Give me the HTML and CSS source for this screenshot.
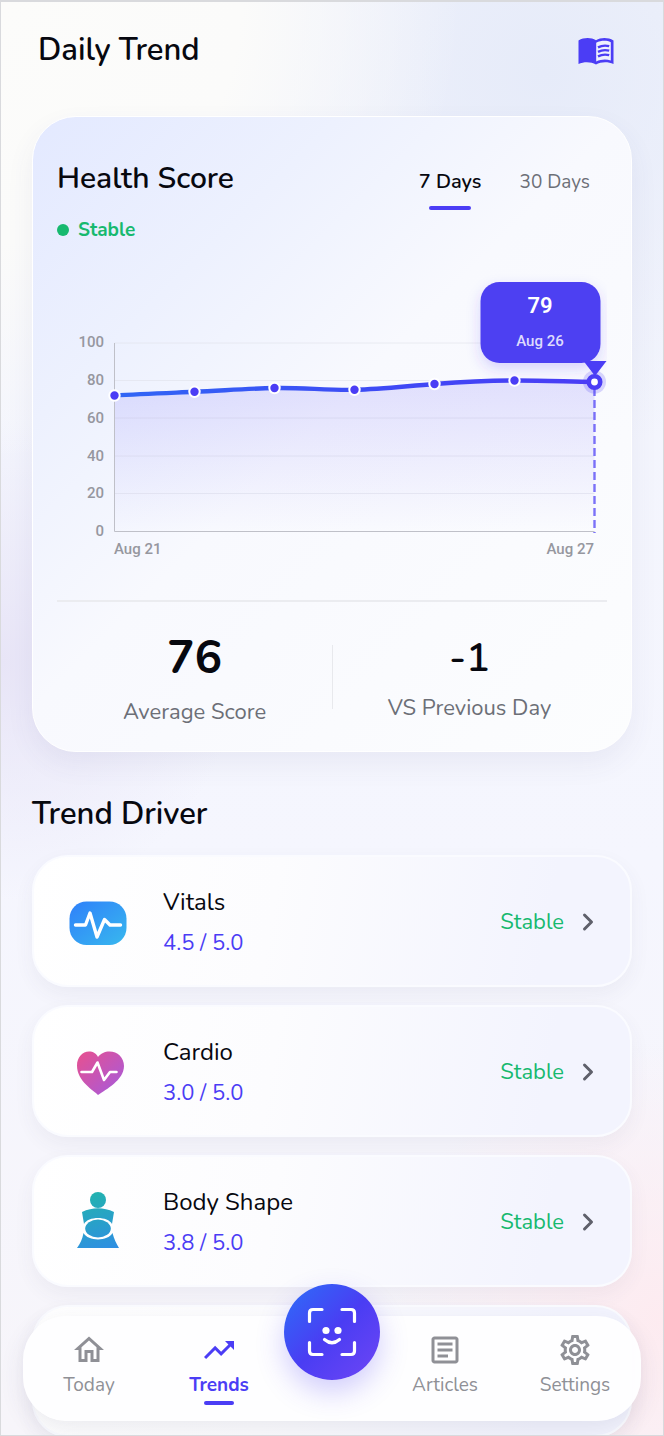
FILE: index.html
```
<!DOCTYPE html>
<html lang="en">
<head>
    <meta charset="UTF-8">
    <meta name="viewport" content="width=device-width, initial-scale=1.0">
    <title>Daily Trend</title>
    <link rel="stylesheet" href="styles.css">
</head>
<body>

<div class="app">
    <main class="content">

        <header class="page-header">
            <h1>Daily Trend</h1>
            <button class="guide-btn" aria-label="Open guide">
                <svg width="36" height="28" viewBox="0 0 36 28">
                    <path fill="#4b3df5" d="M0.5 3.5C6 0.3 13 0.3 18 3.2C23 0.3 30 0.3 35.5 3.5V27C30 24.4 23 24.6 18 27.4C13 24.6 6 24.4 0.5 27Z"/>
                    <path fill="#eef1fd" d="M18.2 5.8C23 3.4 28.5 3.2 32.8 5.2V23.4C28 21.8 23 22.2 18.2 24.4Z"/>
                    <path fill="none" stroke="#4b3df5" stroke-width="2.4" d="M20 10.4Q25.4 7.6 31.2 9.2M20 14.9Q25.4 12.1 31.2 13.7M20 19.4Q25.4 16.6 31.2 18.2"/>
                </svg>
            </button>
        </header>

        <section class="score-card">
            <div class="score-head">
                <div>
                    <h2>Health Score</h2>
                    <p class="status"><span class="dot"></span>Stable</p>
                </div>
                <div class="tabs">
                    <button class="tab active">7 Days</button>
                    <button class="tab">30 Days</button>
                </div>
            </div>

            <svg class="chart" viewBox="0 0 550 310" role="img" aria-label="Health score, Aug 21 to Aug 27">
                <defs>
                    <linearGradient id="area" x1="0" y1="0" x2="0" y2="1">
                        <stop offset="0" stop-color="#4b3df5" stop-opacity="0.14"/>
                        <stop offset="1" stop-color="#4b3df5" stop-opacity="0"/>
                    </linearGradient>
                    <linearGradient id="line" gradientUnits="userSpaceOnUse" x1="57" y1="0" x2="537" y2="0">
                        <stop offset="0" stop-color="#3066f5"/>
                        <stop offset="0.6" stop-color="#3f48f5"/>
                        <stop offset="1" stop-color="#4b3df5"/>
                    </linearGradient>
                    <filter id="tipShadow" x="-30%" y="-30%" width="160%" height="170%">
                        <feDropShadow dx="0" dy="6" stdDeviation="7" flood-color="#4b3df5" flood-opacity="0.2"/>
                    </filter>
                </defs>

                <!-- grid and axes -->
                <path class="grid" d="M57.5 73H537.5M57.5 110.5H537.5M57.5 148H537.5M57.5 186H537.5M57.5 223.5H537.5"/>
                <path fill="url(#area)" d="M57.5 125.5C84 124 110 123 137.5 121.8S190 118.6 217.5 118S270 120.4 297.5 119.8S350 116 377.5 114S430 110.6 457.5 110.5S510 111.6 537.5 112V261H57.5Z"/>
                <path class="axis" d="M57.5 73V261.5H537.5"/>

                <g class="axis-labels" text-anchor="end">
                    <text x="47" y="77">100</text>
                    <text x="47" y="115">80</text>
                    <text x="47" y="153">60</text>
                    <text x="47" y="191">40</text>
                    <text x="47" y="228">20</text>
                    <text x="47" y="266">0</text>
                </g>
                <g class="axis-labels">
                    <text x="57" y="284">Aug 21</text>
                    <text x="537" y="284" text-anchor="end">Aug 27</text>
                </g>

                <!-- series -->
                <path d="M537.5 118V263" stroke="#4b3df5" stroke-opacity="0.72" stroke-width="2.4" stroke-dasharray="8 4"/>
                <path fill="none" stroke="url(#line)" stroke-width="4.4" d="M57.5 125.5C84 124 110 123 137.5 121.8S190 118.6 217.5 118S270 120.4 297.5 119.8S350 116 377.5 114S430 110.6 457.5 110.5S510 111.6 537.5 112"/>
                <g class="points">
                    <circle cx="57.5" cy="125.5" r="5.2"/>
                    <circle cx="137.5" cy="121.8" r="5.2"/>
                    <circle cx="217.5" cy="118" r="5.2"/>
                    <circle cx="297.5" cy="119.8" r="5.2"/>
                    <circle cx="377.5" cy="114" r="5.2"/>
                    <circle cx="457.5" cy="110.5" r="5.2"/>
                </g>

                <!-- selected day -->
                <rect x="423.5" y="12" width="120" height="81" rx="19" fill="#4e41f2" filter="url(#tipShadow)"/>
                <circle cx="537.5" cy="112" r="11.5" fill="#4b3df5" fill-opacity="0.2"/>
                <path fill="#4b3df5" d="M526.5 91H549.5L538 106Z"/>
                <circle cx="537.5" cy="112" r="5.7" fill="#fff" stroke="#4b3df5" stroke-width="4.6"/>
                <text class="tip-value" x="483" y="43" text-anchor="middle">79</text>
                <text class="tip-date" x="483" y="76" text-anchor="middle">Aug 26</text>
            </svg>

            <div class="stats">
                <div class="stat">
                    <strong class="stat-main">76</strong>
                    <span>Average Score</span>
                </div>
                <div class="stat">
                    <strong>-1</strong>
                    <span>VS Previous Day</span>
                </div>
            </div>
        </section>

        <h2 class="section-title">Trend Driver</h2>

        <div class="drivers">
            <a class="driver" href="#vitals">
                <svg class="driver-icon" viewBox="0 0 60 60">
                    <defs>
                        <linearGradient id="vitals" x1="0" y1="0" x2="1" y2="1">
                            <stop offset="0" stop-color="#2f80fa"/>
                            <stop offset="1" stop-color="#38b8ee"/>
                        </linearGradient>
                    </defs>
                    <rect x="1.5" y="9.5" width="57" height="43.5" rx="17" fill="url(#vitals)"/>
                    <path fill="none" stroke="#fff" stroke-width="3.4" stroke-linecap="round" stroke-linejoin="round" d="M7.5 33H17.5L22 21L29 45L36.5 27.5L42 33H52.5"/>
                </svg>
                <span class="driver-text">
                    <span class="driver-name">Vitals</span>
                    <span class="driver-score">4.5 / 5.0</span>
                </span>
                <span class="driver-status">Stable</span>
                <svg class="chevron" viewBox="0 0 12 20"><path d="M2.5 3L9.5 10L2.5 17"/></svg>
            </a>

            <a class="driver" href="#cardio">
                <svg class="driver-icon" viewBox="0 0 60 60">
                    <defs>
                        <linearGradient id="cardio" x1="0" y1="0" x2="1" y2="1">
                            <stop offset="0" stop-color="#e8508e"/>
                            <stop offset="1" stop-color="#a35be0"/>
                        </linearGradient>
                    </defs>
                    <path fill="url(#cardio)" d="M30 53C26 48.5 9 39.5 9 23.5C9 15.5 14.5 9.5 21 9.5C25 9.5 28.5 11.5 30 15C32.5 11.5 37 9.5 41.5 9.5C49.5 9.5 56 15.5 56 24C56 38 38 47.5 30 53Z"/>
                    <path fill="none" stroke="#fff" stroke-width="2.6" stroke-linecap="round" stroke-linejoin="round" d="M13.5 30H24L29.5 20.5L36 38L42 30H48.5"/>
                </svg>
                <span class="driver-text">
                    <span class="driver-name">Cardio</span>
                    <span class="driver-score">3.0 / 5.0</span>
                </span>
                <span class="driver-status">Stable</span>
                <svg class="chevron" viewBox="0 0 12 20"><path d="M2.5 3L9.5 10L2.5 17"/></svg>
            </a>

            <a class="driver" href="#body-shape">
                <svg class="driver-icon" viewBox="0 0 60 60">
                    <defs>
                        <linearGradient id="body" gradientUnits="userSpaceOnUse" x1="22" y1="0" x2="38" y2="58">
                            <stop offset="0" stop-color="#22b3ae"/>
                            <stop offset="1" stop-color="#2f8fe2"/>
                        </linearGradient>
                    </defs>
                    <g fill="url(#body)">
                        <circle cx="30" cy="8" r="8"/>
                        <path d="M14 20Q30 12.5 46 20L44 32C40 24 20 24 16 32Z"/>
                        <ellipse cx="30" cy="36.5" rx="12.8" ry="9"/>
                        <path d="M15.5 41C20 49.5 40 49.5 44.5 41C46 47 48.5 52 51 56H9C12 52 14.5 47 15.5 41Z"/>
                    </g>
                </svg>
                <span class="driver-text">
                    <span class="driver-name">Body Shape</span>
                    <span class="driver-score">3.8 / 5.0</span>
                </span>
                <span class="driver-status">Stable</span>
                <svg class="chevron" viewBox="0 0 12 20"><path d="M2.5 3L9.5 10L2.5 17"/></svg>
            </a>

            <div class="driver"></div>
        </div>
    </main>

    <nav class="tab-bar">
        <a href="#today">
            <svg viewBox="0 0 24 24"><path d="M12 5.69l5 4.5V18h-2v-6H9v6H7v-7.81l5-4.5M12 3L2 12h3v8h6v-6h2v6h6v-8h3L12 3z"/></svg>
            <span>Today</span>
        </a>
        <a href="#trends" class="current">
            <svg viewBox="0 0 24 24"><path d="M16 6l2.29 2.29-4.88 4.88-4-4L2 16.59 3.41 18l6-6 4 4 6.3-6.29L22 12V6z"/></svg>
            <span>Trends</span>
        </a>
        <button class="scan-btn" aria-label="Scan face">
            <svg width="50" height="50" viewBox="0 0 50 50">
                <g fill="none" stroke="#fff" stroke-width="3.2" stroke-linecap="round">
                    <path d="M2.5 14.5V6Q2.5 2.5 6 2.5H15M35 2.5H44Q47.5 2.5 47.5 6V14.5M47.5 35.5V44Q47.5 47.5 44 47.5H35M15 47.5H6Q2.5 47.5 2.5 44V35.5"/>
                    <path d="M17.5 32.5Q25 39 32.5 32.5"/>
                </g>
                <circle cx="19" cy="23.5" r="3.6" fill="#fff"/>
                <circle cx="31" cy="23.5" r="3.6" fill="#fff"/>
            </svg>
        </button>
        <a href="#articles">
            <svg viewBox="0 0 24 24"><path d="M19 5v14H5V5h14m0-2H5c-1.1 0-2 .9-2 2v14c0 1.1.9 2 2 2h14c1.1 0 2-.9 2-2V5c0-1.1-.9-2-2-2zM14 17H7v-2h7v2zm3-4H7v-2h10v2zm0-4H7V7h10v2z"/></svg>
            <span>Articles</span>
        </a>
        <a href="#settings">
            <svg viewBox="0 0 24 24"><path d="M19.43 12.98c.04-.32.07-.64.07-.98 0-.34-.03-.66-.07-.98l2.11-1.65c.19-.15.24-.42.12-.64l-2-3.46c-.09-.16-.26-.25-.44-.25-.06 0-.12.01-.17.03l-2.49 1c-.52-.4-1.08-.73-1.69-.98l-.38-2.65C14.46 2.18 14.25 2 14 2h-4c-.25 0-.46.18-.49.42l-.38 2.65c-.61.25-1.17.59-1.69.98l-2.49-1c-.06-.02-.12-.03-.18-.03-.17 0-.34.09-.43.25l-2 3.46c-.13.22-.07.49.12.64l2.11 1.65c-.04.32-.07.65-.07.98 0 .33.03.66.07.98l-2.11 1.65c-.19.15-.24.42-.12.64l2 3.46c.09.16.26.25.44.25.06 0 .12-.01.17-.03l2.49-1c.52.4 1.08.73 1.69.98l.38 2.65c.03.24.24.42.49.42h4c.25 0 .46-.18.49-.42l.38-2.65c.61-.25 1.17-.59 1.69-.98l2.49 1c.06.02.12.03.18.03.17 0 .34-.09.43-.25l2-3.46c.12-.22.07-.49-.12-.64l-2.11-1.65zm-1.98-1.71c.04.31.05.52.05.73 0 .21-.02.43-.05.73l-.14 1.13.89.7 1.08.84-.7 1.21-1.27-.51-1.04-.42-.9.68c-.43.32-.84.56-1.25.73l-1.06.43-.16 1.13-.2 1.35h-1.4l-.19-1.35-.16-1.13-1.06-.43c-.43-.18-.83-.41-1.23-.71l-.91-.7-1.06.43-1.27.51-.7-1.21 1.08-.84.89-.7-.14-1.13c-.03-.31-.05-.54-.05-.74s.02-.43.05-.73l.14-1.13-.89-.7-1.08-.84.7-1.21 1.27.51 1.04.42.9-.68c.43-.32.84-.56 1.25-.73l1.06-.43.16-1.13.2-1.35h1.39l.19 1.35.16 1.13 1.06.43c.43.18.83.41 1.23.71l.91.7 1.06-.43 1.27-.51.7 1.21-1.07.85-.89.7.14 1.13zM12 8c-2.21 0-4 1.79-4 4s1.79 4 4 4 4-1.79 4-4-1.79-4-4-4zm0 6c-1.1 0-2-.9-2-2s.9-2 2-2 2 .9 2 2-.9 2-2 2z"/></svg>
            <span>Settings</span>
        </a>
    </nav>
</div>

</body>
</html>
```
FILE: styles.css
```
* {
    box-sizing: border-box;
}

body {
    margin: 0;
    font-family: "Nunito", "Lato", sans-serif;
    color: #07080f;
}

h1, h2, p {
    margin: 0;
}

h1, h2 {
    font-size: 31px;
    line-height: 40px;
    font-weight: 600;
}

button {
    font: inherit;
    border: none;
    background: none;
    padding: 0;
    cursor: pointer;
}

a {
    color: inherit;
    text-decoration: none;
}

/* Shell: scrolling content with the tab bar floating on top */
.app {
    position: relative;
    height: 100vh;
    overflow: hidden;
    border: 1px solid #d9dadd;
    border-top-width: 2px;
    background:
        radial-gradient(circle at 0% 0%, #fcfcfa 0, #fbfbfa 240px, rgba(251, 251, 250, 0) 460px),
        radial-gradient(circle at 82% 5%, #e6ebf9 0, rgba(230, 235, 249, 0) 380px),
        radial-gradient(circle at 0% 46%, #e8e5f7 0, rgba(232, 229, 247, 0) 240px),
        radial-gradient(circle at 100% 92%, #fdebf0 0, rgba(253, 235, 240, 0) 280px),
        linear-gradient(#f2f4fc, #f5f6fe 60%, #f7f5fa);
}

.content {
    height: 100%;
    overflow-y: auto;
    scrollbar-width: none;
    padding: 28px 31px 0;
}

.page-header {
    display: flex;
    justify-content: space-between;
    align-items: center;
    padding: 0 18px 0 6px;
    margin-bottom: 46px;
}

.guide-btn svg {
    display: block;
    margin-top: 2px;
}

/* Health score card */
.score-card {
    padding: 42px 24px 25px;
    border: 1px solid #fff;
    border-radius: 44px;
    background: linear-gradient(135deg, #e3e9ff 0%, #edf1fe 25%, #f8f9fe 48%, #fcfdfe 100%);
    box-shadow: 0 12px 28px rgba(70, 70, 130, 0.07);
}

.score-card h2 {
    font-size: 30px;
}

.score-head {
    display: flex;
    justify-content: space-between;
}

.status {
    display: flex;
    align-items: center;
    gap: 9px;
    margin-top: 17px;
    font-size: 19px;
    line-height: 28px;
    font-weight: 700;
    color: #17b96f;
}

.dot {
    width: 12px;
    height: 12px;
    border-radius: 50%;
    background: #17b96f;
}

.tabs {
    display: flex;
    align-items: flex-start;
    gap: 38px;
    padding: 9px 17px 0 0;
}

.tab {
    font-size: 19px;
    line-height: 28px;
    color: #6c6f77;
}

.tab.active {
    font-size: 20px;
    font-weight: 600;
    color: #07080f;
}

.tab.active::after {
    content: "";
    display: block;
    width: 42px;
    height: 4px;
    margin: 10px auto 0;
    border-radius: 2px;
    background: #4b3df5;
}

.chart {
    display: block;
    width: 100%;
    margin-top: 26px;
    font-family: Roboto, sans-serif;
    font-weight: 500;
}

.grid {
    stroke: #dfe1ea;
    stroke-opacity: 0.6;
}

.axis {
    fill: none;
    stroke: #bfc0c8;
}

.axis-labels {
    font-size: 15px;
    fill: #96979f;
}

.points circle {
    fill: #4b3df5;
    stroke: #fff;
    stroke-width: 2px;
}

.tip-value {
    font-size: 22px;
    font-weight: 600;
    fill: #fff;
}

.tip-date {
    font-size: 15px;
    fill: #dedbfd;
}

.stats {
    position: relative;
    display: grid;
    grid-template-columns: 1fr 1fr;
    align-items: center;
    margin-top: 20px;
    padding-top: 28px;
    border-top: 2px solid #ebecf0;
}

.stats::after {
    content: "";
    position: absolute;
    left: 50%;
    bottom: 17px;
    width: 1px;
    height: 64px;
    background: #e8e9ed;
}

.stat {
    display: flex;
    flex-direction: column;
    align-items: center;
    gap: 12px;
    font-size: 22px;
    line-height: 28px;
    color: #6c6f77;
}

.stat strong {
    font-size: 40px;
    line-height: 48px;
    font-weight: 600;
    color: #07080f;
}

.stat .stat-main {
    font-size: 46px;
    line-height: 56px;
    font-weight: 700;
}

/* Trend drivers */
.section-title {
    margin: 42px 0 21px;
}

.drivers {
    display: flex;
    flex-direction: column;
    gap: 18px;
}

.driver {
    display: flex;
    align-items: center;
    height: 132px;
    flex-shrink: 0;
    padding: 2px 36px 0 34px;
    border: 2px solid #fafbff;
    border-radius: 36px;
    background: linear-gradient(100deg, #fff 0%, #fcfcfe 40%, #f3f4fe 85%);
    box-shadow: 0 8px 20px rgba(70, 70, 110, 0.06);
}

.driver-icon {
    width: 60px;
    height: 60px;
    margin-right: 35px;
}

.driver-text {
    display: flex;
    flex-direction: column;
    gap: 9px;
    flex: 1;
    line-height: 32px;
}

.driver-name {
    font-size: 24px;
    color: #07080f;
}

.driver-score {
    font-size: 22px;
    color: #4b3df5;
}

.driver-status {
    font-size: 22px;
    color: #17b96f;
}

.chevron {
    width: 12px;
    height: 20px;
    margin-left: 18px;
    fill: none;
    stroke: #5f606b;
    stroke-width: 3;
    stroke-linecap: round;
    stroke-linejoin: round;
}

/* Bottom tab bar */
.tab-bar {
    position: absolute;
    left: 22px;
    right: 22px;
    bottom: 14px;
    display: grid;
    grid-template-columns: 1fr 1fr 96px 1fr 1fr;
    height: 105px;
    padding: 0 1px;
    border-radius: 44px;
    background: rgba(254, 254, 255, 0.96);
    box-shadow: 0 8px 24px rgba(60, 60, 100, 0.1);
}

.tab-bar a {
    display: flex;
    flex-direction: column;
    align-items: center;
    padding-top: 16px;
    font-size: 19px;
    line-height: 28px;
    color: #8f9096;
}

.tab-bar a svg {
    width: 36px;
    height: 36px;
    margin-bottom: 3px;
    fill: currentColor;
}

.tab-bar .current {
    font-weight: 700;
    color: #4b3df5;
}

.tab-bar .current::after {
    content: "";
    width: 30px;
    height: 4px;
    margin-top: 2px;
    border-radius: 2px;
    background: #4b3df5;
}

.scan-btn {
    display: flex;
    align-items: center;
    justify-content: center;
    width: 96px;
    height: 96px;
    margin-top: -32px;
    border-radius: 50%;
    background: linear-gradient(135deg, #2f6af8 5%, #4a3df3 50%, #6b45f5 95%);
    box-shadow: 0 12px 28px rgba(75, 61, 245, 0.25);
}
```
